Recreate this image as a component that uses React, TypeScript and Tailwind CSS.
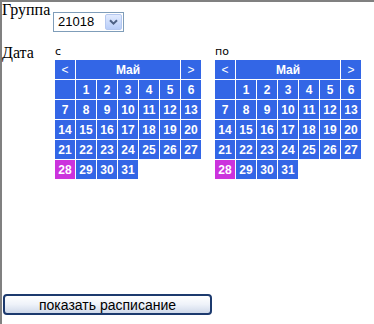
import React from "react"

const weeks: (number | null)[][] = [
  [null, 1, 2, 3, 4, 5, 6],
  [7, 8, 9, 10, 11, 12, 13],
  [14, 15, 16, 17, 18, 19, 20],
  [21, 22, 23, 24, 25, 26, 27],
]

function Calendar({ label }: { label: string }) {
  return (
    <div className="flex flex-col">
      <div className="h-[16px] leading-[16px] text-[11px] text-black font-['DejaVu_Sans',sans-serif]">
        {label}
      </div>
      <div className="grid grid-cols-7 gap-px w-[146px] auto-rows-[19px] text-white text-[12px] font-['Liberation_Sans',Arial,sans-serif]">
        <div className="bg-[#3366e6] flex items-center justify-center">&lt;</div>
        <div className="col-span-5 bg-[#3366e6] flex items-center justify-center font-bold">Май</div>
        <div className="bg-[#3366e6] flex items-center justify-center">&gt;</div>
        {weeks.flat().map((d, i) => (
          <div key={i} className="bg-[#3366e6] flex items-center justify-center font-bold">
            {d}
          </div>
        ))}
        <div className="bg-[#cc33dd] flex items-center justify-center font-bold">28</div>
        {[29, 30, 31].map((d) => (
          <div key={d} className="bg-[#3366e6] flex items-center justify-center font-bold">
            {d}
          </div>
        ))}
      </div>
    </div>
  )
}

export default function App() {
  return (
    <div className="w-[374px] h-[324px] border-l-2 border-t-2 border-[#808080] bg-white flex flex-col">
      <div className="flex">
        <span className="w-[51px] -mt-px text-[16px] leading-[18px] text-black font-['Liberation_Serif','Times_New_Roman',serif]">
          Группа
        </span>
        <div className="mt-[10px] w-[71px] h-[20px] border border-[#7f9db9] bg-white flex items-center justify-between pl-[4px] pr-px">
          <span className="text-[13px] text-black font-['Liberation_Sans',Arial,sans-serif]">21018</span>
          <div className="w-[17px] h-[16px] rounded-[2px] border border-[#b5c8f0] bg-gradient-to-b from-[#e2ebfe] to-[#b8cdf8] flex items-center justify-center">
            <svg width="9" height="6" viewBox="0 0 9 6">
              <path d="M1 1.2 L4.5 4.6 L8 1.2" fill="none" stroke="#4d6185" strokeWidth="2" />
            </svg>
          </div>
        </div>
      </div>
      <div className="flex mt-[12px]">
        <span className="w-[53px] text-[16px] leading-[18px] text-black font-['Liberation_Serif','Times_New_Roman',serif]">
          Дата
        </span>
        <div className="flex gap-[14px]">
          <Calendar label="с" />
          <Calendar label="по" />
        </div>
      </div>
      <button className="mt-auto mb-[9px] ml-px w-[209px] h-[21px] rounded-[4px] border-2 border-[#1c3a6e] bg-gradient-to-b from-[#ffffff] via-[#eef2f9] to-[#cfd9ea] text-[14px] leading-none text-black font-['Liberation_Sans',Arial,sans-serif] flex items-center justify-center">
        показать расписание
      </button>
    </div>
  )
}
